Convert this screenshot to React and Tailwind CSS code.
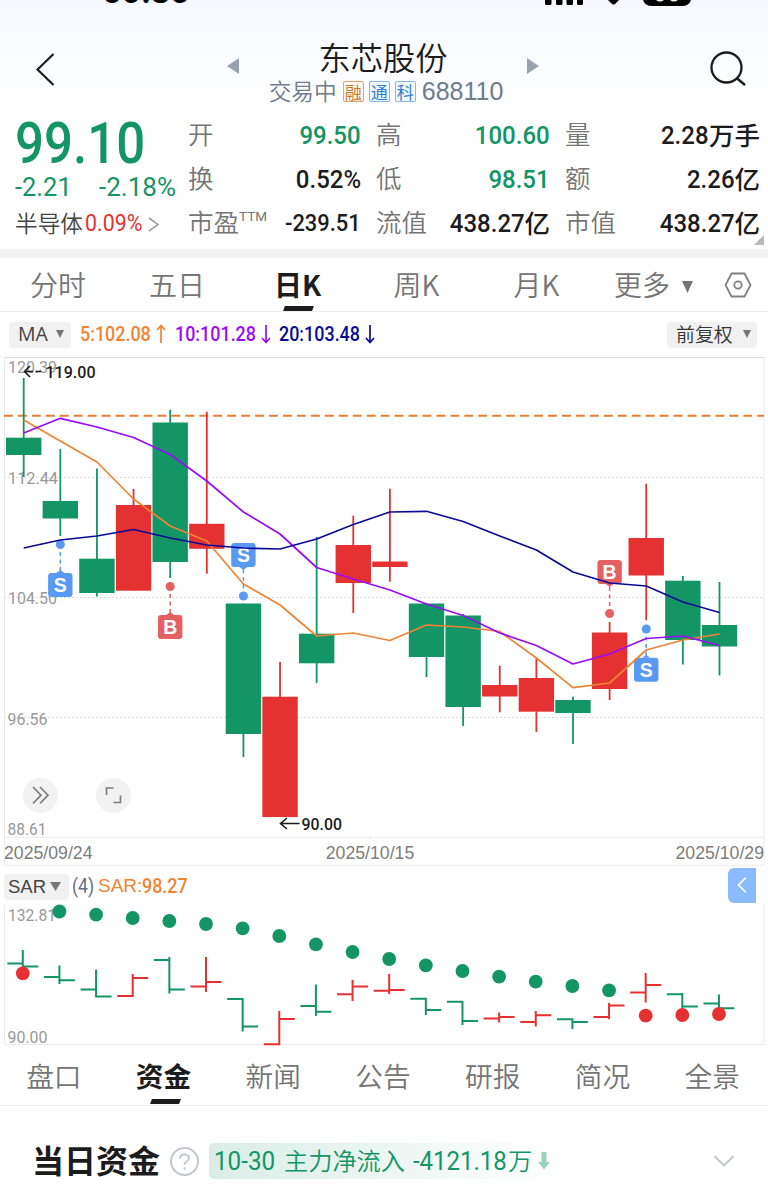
import React from 'react';
import clsx from 'clsx';

const GREEN = '#139565';
const RED = '#e63133';

// y values in chart coordinates, up = red, down = green
const candles = [
  { up: false, top: 437.7, bottom: 455, high: 378, low: 477 },
  { up: false, top: 501, bottom: 518.5, high: 449, low: 536 },
  { up: false, top: 558.7, bottom: 593, high: 468.5, low: 596.5 },
  { up: true, top: 505, bottom: 590.7, high: 489, low: 590.7 },
  { up: false, top: 422.5, bottom: 562, high: 409.7, low: 578 },
  { up: true, top: 523.8, bottom: 548.8, high: 411.7, low: 573.7 },
  { up: false, top: 603.5, bottom: 734, high: 603.5, low: 757 },
  { up: true, top: 696.7, bottom: 817, high: 662, low: 817 },
  { up: false, top: 633.7, bottom: 663.3, high: 537, low: 683 },
  { up: true, top: 545, bottom: 583, high: 515.7, low: 613 },
  { up: true, top: 561.5, bottom: 567, high: 488.7, low: 581.7 },
  { up: false, top: 603.5, bottom: 657, high: 603.5, low: 677 },
  { up: false, top: 615.5, bottom: 707, high: 614, low: 726 },
  { up: true, top: 685, bottom: 696.5, high: 665.7, low: 712.3 },
  { up: true, top: 678, bottom: 711.7, high: 658, low: 732 },
  { up: false, top: 700, bottom: 713, high: 696.7, low: 744 },
  { up: true, top: 632.5, bottom: 689, high: 622, low: 700 },
  { up: true, top: 538, bottom: 575.5, high: 483.7, low: 620.3 },
  { up: false, top: 580.7, bottom: 640, high: 576, low: 664.5 },
  { up: false, top: 625, bottom: 646.5, high: 582, low: 675.5 },
];

const ma5 = [420, 441, 462, 499, 526, 541, 584, 605, 636, 633, 640.5, 625, 627, 631.5, 658, 687.7, 683, 650, 640, 634];
const ma10 = [433, 418.3, 427, 437.5, 454.5, 481, 512, 534, 567.5, 579, 590, 604, 615.5, 633, 645.5, 664, 654, 638.5, 636, 645.5];
const ma20 = [548, 540, 536, 529.5, 538, 545, 548, 549, 539, 524.5, 512, 511.3, 521.5, 536, 550, 572, 583, 586, 602, 612.5];

const markers = [
  { i: 1, type: 'S', box: 573, dot: 544.5 },
  { i: 4, type: 'B', box: 615, dot: 586.5 },
  { i: 6, type: 'S', box: 543, dot: 596 },
  { i: 16, type: 'B', box: 560, dot: 613.5 },
  { i: 17, type: 'S', box: 657.7, dot: 629 },
];

// open, close, high, low
const sarBars = [
  [963.5, 966.5, 950, 970],
  [977, 980.3, 965.5, 984],
  [989.5, 996.5, 969.5, 997],
  [996, 978, 974, 996],
  [960, 989.5, 957, 993.5],
  [986.5, 982, 957, 992],
  [999, 1026.5, 999, 1031.5],
  [1044.3, 1019, 1011, 1044],
  [1006, 1011.7, 984.5, 1016],
  [994.3, 986.5, 980, 1001],
  [990.8, 990, 974, 994],
  [998.7, 1010, 998.7, 1015],
  [1001.7, 1021, 1001.7, 1025],
  [1018.5, 1017, 1012.5, 1022.5],
  [1022, 1015.3, 1011, 1026.5],
  [1019.3, 1022, 1019.3, 1029],
  [1017, 1005.5, 1003, 1019],
  [992.5, 985, 973, 1002.5],
  [994.3, 1006.5, 993, 1008],
  [1003.5, 1008.3, 994.5, 1013],
];

const sarDots = [973.3, 911.5, 914.7, 918, 921, 924, 928.3, 936, 944.3, 952, 959, 965.3, 971, 976.7, 981.7, 986, 990.3, 1015.7, 1015, 1014];
const sarRed = [0, 17, 18, 19];

const cx = (i) => 23.7 + i * 36.62;
const sx = (i) => 22.8 + i * 36.64;
const toPoints = (ys) => ys.map((y, i) => `${cx(i)},${y}`).join(' ');

// Narrow figures. The outer box holds the final width, the inner one is squeezed
const Num = ({ children, className, right, squeeze = 'scale-x-[.895]' }) => (
  <span className={clsx('flex shrink-0 whitespace-nowrap font-[Roboto]', right && 'justify-end', className)}>
    <span className={clsx('block', squeeze, right ? 'origin-right' : 'origin-left')}>{children}</span>
  </span>
);

const Triangle = ({ className }) => (
  <svg className={className} viewBox="0 0 10 10" preserveAspectRatio="none" fill="currentColor">
    <path d="M0 0H10L5 10Z" />
  </svg>
);

const StatusBar = () => (
  <div className="relative h-10 overflow-hidden">
    <span className="absolute left-[102px] -top-[27px] font-[Inter] text-[30px] leading-[38px] font-bold tracking-[-0.3px]">09:36</span>
    <svg className="absolute left-[544px] top-0" width="150" height="8" viewBox="0 0 150 8">
      <path d="M1 0h6.500v3.500q0 1.500-1.500 1.500H2.500q-1.500 0-1.500-1.500zM12 0h6.500v3.500q0 1.500-1.500 1.500h-3.500q-1.500 0-1.500-1.500zM22.500 0h6.500v3.500q0 1.500-1.500 1.500h-3.500q-1.500 0-1.500-1.500zM33 0h6v3.500q0 1.500-1.500 1.500h-3q-1.500 0-1.500-1.500z" />
      <path d="M64 0h11l-4 4q-1.500 1.200-3 0z" />
      <path d="M99 0h48q-2 6-9 6h-30q-7 0-9-6z" />
      <path d="M112 0q4 3 8 0zM126 0q4 3 8 0z" fill="#fff" />
    </svg>
  </div>
);

const Badge = ({ children, className }) => (
  <span className={clsx('flex h-[21px] w-[21px] items-center justify-center rounded-[2px] border text-[17px] leading-none', className)}>
    {children}
  </span>
);

const Header = () => (
  <div className="flex h-[70px] items-start justify-between pl-[36px] pr-[21px]">
    <svg className="mt-[13px]" width="20" height="34" viewBox="0 0 20 34" fill="none" stroke="#1b1b1b" strokeWidth="2.2">
      <path d="M17.500 1L1.500 16.500L17.500 32" />
    </svg>
    <div className="flex w-[320px] flex-col items-center">
      <div className="flex h-[37px] w-full items-center justify-between pl-[4px] pr-[4px]">
        <svg className="mt-[15px]" width="12" height="16" fill="#99a3af"><path d="M12 0V16L0 8Z" /></svg>
        <h1 className="-mt-[5px] text-[32.300px] leading-[32px] font-[350] text-[#1c1c1c]">东芯股份</h1>
        <svg className="mt-[15px]" width="12" height="16" fill="#99a3af"><path d="M0 0V16L12 8Z" /></svg>
      </div>
      <div className="flex h-7 items-center pl-[6px] text-[#6e7c8c]">
        <span className="mr-[6px] text-[22.700px] leading-7 font-[350]">交易中</span>
        <Badge className="mr-[5px] border-[#e0a46c] bg-[#fff8f0] text-[#c87a32]">融</Badge>
        <Badge className="mr-[5px] border-[#86b8ea] bg-[#f2f8ff] text-[#3080d0]">通</Badge>
        <Badge className="mr-[6px] border-[#86b8ea] bg-[#f2f8ff] text-[#3080d0]">科</Badge>
        <span className="font-['Liberation_Sans'] text-[25px] leading-7">688110</span>
      </div>
    </div>
    <svg className="mt-[11px]" width="37" height="36" viewBox="0 0 37 36" fill="none" stroke="#1b1b1b" strokeWidth="2.300">
      <circle cx="16.500" cy="16.500" r="15" />
      <path d="M26.500 27L35 34" />
    </svg>
  </div>
);

const Stat = ({ label, sup, value, unit, green, small }) => (
  <div className="flex h-11 items-center justify-between">
    <span className="flex pb-[3px] text-[25.500px] font-[350] text-[#757575]">
      {label}
      {sup && <sup className="top-0 mt-[8px] font-[Roboto] text-[13.500px] leading-none font-normal">{sup}</sup>}
    </span>
    <span
      className={clsx(
        'flex items-center font-medium',
        small ? 'text-[24.200px]' : 'text-[26.500px]',
        green ? 'text-[#139565]' : 'text-[#1c1c1c]'
      )}
    >
      <Num right className="w-[76px]" squeeze="scale-x-[.905]">{value}</Num>
      {unit && <span className="pb-[2px] text-[25.500px]">{unit}</span>}
    </span>
  </div>
);

const Quote = () => (
  <div className="flex h-[139px] pt-[3px]">
    <div className="w-[188px] pl-[15px]">
      <Num className="h-[52px] text-[57px] leading-[61px] font-medium text-[#139565]">99.10</Num>
      <div className="flex h-[44px] items-center text-[26px] font-[450] text-[#139565]">
        <Num className="w-[84px]" squeeze="scale-x-[.98]">-2.21</Num>
        <Num>
          <span className="block origin-left scale-x-[1.12]">-2.18%</span>
        </Num>
      </div>
      <div className="-mt-[4px] flex h-[38px] items-center">
        <span className="pb-[2px] text-[22.700px] font-[350] text-[#444]">半导体</span>
        <Num className="ml-[2px] w-[63px] text-[23.500px] font-[450] text-[#e63133]" squeeze="scale-x-[.91]">0.09%</Num>
        <svg width="11" height="15" fill="none" stroke="#9aa3ad" strokeWidth="1.600"><path d="M1 1L10 7.500L1 14" /></svg>
      </div>
    </div>
    <div className="w-[173px]">
      <Stat label="开" value="99.50" green />
      <Stat label="换" value="0.52%" />
      <Stat label="市盈" sup="TTM" value="-239.51" small />
    </div>
    <div className="ml-[15px] w-[174px]">
      <Stat label="高" value="100.60" green />
      <Stat label="低" value="98.51" green />
      <Stat label="流值" value="438.27" unit="亿" />
    </div>
    <div className="ml-[15px] w-[195px]">
      <Stat label="量" value="2.28" unit="万手" />
      <Stat label="额" value="2.26" unit="亿" />
      <Stat label="市值" value="438.27" unit="亿" />
    </div>
    <svg className="-ml-[6px] mt-[122px]" width="10" height="10" fill="#b9b9b9"><path d="M10 0V10H0Z" /></svg>
  </div>
);

const PeriodTabs = () => (
  <div className="flex h-[54px] items-center border-b border-[#ededed] pb-px text-[28px] font-[350] text-[#757575]">
    <span className="w-[119px] pl-[30px]">分时</span>
    <span className="w-[119px] pl-[30px]">五日</span>
    <span className="relative flex h-full w-[119px] items-center justify-center font-bold text-[#1c1c1c]">
      日K
      <i className="absolute -bottom-px left-[46px] h-[5px] w-[29px] -skew-x-[20deg] bg-[#1c1c1c]" />
    </span>
    <span className="w-[119px] text-center">周K</span>
    <span className="w-[121px] text-center">月K</span>
    <span className="pl-[17px]">更多</span>
    <Triangle className="ml-[12px] mt-[5px] h-[12px] w-[11px]" />
    <svg className="ml-[31px] mt-px" width="28" height="26" fill="none" stroke="#808080" strokeWidth="1.800">
      <path d="M7.500 1.500H20.500L26.500 13L20.500 24.500H7.500L1.500 13Z" />
      <circle cx="14" cy="13" r="3.700" />
    </svg>
  </div>
);

const MaArrow = ({ up }) => (
  <svg width="10" height="20" fill="none" stroke="currentColor" strokeWidth="1.700">
    <path d={up ? 'M5 19V1M1 6L5 1.500L9 6' : 'M5 1V19M1 14L5 18.500L9 14'} />
  </svg>
);

const MaBar = () => (
  <div className="flex h-[45px] items-center pl-[9px] pr-[11px]">
    <span className="flex h-[26px] w-[62px] items-center rounded-[4px] bg-[#f1f1f1] pb-px pl-[9px] text-[#444]">
      <span className="font-['Open_Sans'] text-[19.500px]">MA</span>
      <Triangle className="ml-[8px] h-[8px] w-[8px] text-[#777]" />
    </span>
    <div className="flex flex-1 items-center text-[19.700px] font-medium">
      <span className="flex w-[95px] items-center pl-[9px] text-[#f08433]">
        <Num className="w-[76px]" squeeze="scale-x-[.91]">5:102.08</Num>
        <MaArrow up />
      </span>
      <span className="flex w-[104px] items-center pl-[9px] text-[#9a0cf5]">
        <Num className="w-[86px]" squeeze="scale-x-[.91]">10:101.28</Num>
        <MaArrow />
      </span>
      <span className="flex items-center pl-[9px] text-[#0a0a96]">
        <Num className="w-[86px]" squeeze="scale-x-[.91]">20:103.48</Num>
        <MaArrow />
      </span>
    </div>
    <span className="flex h-[26px] w-[90px] items-center rounded-[4px] bg-[#f1f1f1] pb-px pl-[9px] text-[18.900px] font-[350] text-[#333]">
      前复权
      <Triangle className="ml-[10px] h-[8px] w-[8px] text-[#777]" />
    </span>
  </div>
);

const Marker = ({ i, type, box, dot }) => {
  const x = cx(i);
  const color = type === 'S' ? '#5899f4' : '#e56062';
  const below = box > dot;
  const edge = below ? box : box + 24;
  const tip = below ? edge - 3 : edge + 3;
  return (
    <g fill={color}>
      <path d={`M${x} ${dot}V${edge}`} stroke={color} strokeWidth="1.500" strokeDasharray="4 3.500" />
      <circle cx={x} cy={dot} r="4.500" />
      <path d={`M${x - 4} ${edge}H${x + 4}L${x} ${tip}Z`} />
      <rect x={x - 12.200} y={box} width="24.400" height="24" rx="3" />
      <text x={x} y={box + 19} textAnchor="middle" fill="#fff" className="font-['Liberation_Sans'] text-[19.500px] font-bold">{type}</text>
    </g>
  );
};

const KLineChart = () => (
  <svg className="block" width="768" height="509" viewBox="0 357 768 509">
    <g fill="none" stroke="#ebebeb">
      <path d="M4 357.500H764.500" stroke="#dedede" />
      <path d="M4.500 357V865M764 357V865M4 837.300H764M4 865.300H764M370 835V841" />
      <path d="M4 477.500H764M4 597.500H764M4 717.500H764" stroke="#dcdcdc" strokeDasharray="2 2" />
    </g>
    <g fill="#999" className="font-[Roboto] text-[17.200px]">
      <text x="8" y="373" textLength="49" lengthAdjust="spacingAndGlyphs">120.39</text>
      <text x="8" y="484" textLength="50" lengthAdjust="spacingAndGlyphs">112.44</text>
      <text x="8" y="604" textLength="49" lengthAdjust="spacingAndGlyphs">104.50</text>
      <text x="7.500" y="724.500" textLength="40" lengthAdjust="spacingAndGlyphs">96.56</text>
      <text x="7.500" y="835" textLength="39" lengthAdjust="spacingAndGlyphs">88.61</text>
    </g>
    <path d="M4 415.700H764" stroke="#e87d33" strokeWidth="2" strokeDasharray="8.900 5.050" />
    {candles.map((c, i) => (
      <g key={i} fill={c.up ? RED : GREEN}>
        <rect x={cx(i) - 0.900} y={c.high} width="1.800" height={c.low - c.high} />
        <rect x={cx(i) - 17.700} y={c.top} width="35.400" height={c.bottom - c.top} />
      </g>
    ))}
    {markers.map((m) => <Marker key={m.i} {...m} />)}
    <g fill="none" strokeWidth="1.700" strokeLinejoin="round">
      <polyline points={toPoints(ma5)} stroke="#f08433" />
      <polyline points={toPoints(ma10)} stroke="#9a0cf5" />
      <polyline points={toPoints(ma20)} stroke="#0a0a96" />
    </g>
    <g fill="none" stroke="#1c1c1c" strokeWidth="1.600">
      <path d="M30 366L24.500 371.500L30 377M25 371.500H33M35.500 371.500H41" />
      <path d="M287 818L280.500 823.500L287 829M281 823.500H299.500" />
    </g>
    <g fill="#1c1c1c" className="font-[Roboto] text-[17.200px] font-medium">
      <text x="45.500" y="378" textLength="50" lengthAdjust="spacingAndGlyphs">119.00</text>
      <text x="301.500" y="830" textLength="40.500" lengthAdjust="spacingAndGlyphs">90.00</text>
    </g>
    <g fill="#f2f2f2">
      <circle cx="40.300" cy="795.500" r="17.500" />
      <circle cx="113.500" cy="795.500" r="17.500" />
    </g>
    <g fill="none" stroke="#7d7d7d" strokeWidth="1.700">
      <path d="M33 787L41 795.200L33 803.500M40 787L48 795.200L40 803.500" />
      <path d="M106.500 795V788H113.500M120.500 795.500V802.500H113.500" />
    </g>
    <g fill="#7d7d7d" className="font-['Liberation_Sans'] text-[17.700px]">
      <text x="4" y="858.500">2025/09/24</text>
      <text x="370" y="858.500" textAnchor="middle">2025/10/15</text>
      <text x="764" y="858.500" textAnchor="end">2025/10/29</text>
    </g>
  </svg>
);

const SarBar = () => (
  <div className="flex h-[39px] items-center pl-[4px] pr-[12px] pt-[2px]">
    <span className="flex h-[26px] w-[65px] items-center rounded-[4px] bg-[#f1f1f1] pl-[4px] text-[#444]">
      <span className="font-['Liberation_Sans'] text-[18.500px]">SAR</span>
      <Triangle className="ml-[4px] h-[9px] w-[11px] text-[#777]" />
    </span>
    <Num className="ml-[3px] w-[26px] text-[19.700px] text-[#667085]">(4)</Num>
    <span className="font-['Liberation_Sans'] text-[19px] text-[#f08433]">SAR:</span>
    <Num className="flex-1 text-[19.700px] font-medium text-[#f08433]" squeeze="scale-x-[.91]">98.27</Num>
    <button className="-mt-[3px] flex h-[35px] w-[28px] items-center justify-center rounded-l-[6px] bg-[#8abaff]">
      <svg width="10" height="18" fill="none" stroke="#fff" strokeWidth="1.700"><path d="M9 1.500L1.500 9L9 16.500" /></svg>
    </button>
  </div>
);

const SarChart = () => (
  <svg className="block overflow-visible" width="768" height="140" viewBox="0 905 768 140">
    <path d="M4.500 905V1044.500H764V905" fill="none" stroke="#ececec" />
    <g fill="#999" className="font-[Roboto] text-[17.200px]">
      <text x="8" y="920.500" textLength="48" lengthAdjust="spacingAndGlyphs">132.81</text>
      <text x="7.500" y="1042.500" textLength="40" lengthAdjust="spacingAndGlyphs">90.00</text>
    </g>
    {sarBars.map(([open, close, high, low], i) => (
      <path
        key={i}
        d={`M${sx(i)} ${high}V${low}M${sx(i) - 15.500} ${open}H${sx(i) + 1}M${sx(i) - 1} ${close}H${sx(i) + 15.500}`}
        stroke={close < open ? RED : GREEN}
        strokeWidth="2"
      />
    ))}
    {sarDots.map((y, i) => (
      <circle key={i} cx={sx(i)} cy={y} r="6.900" fill={sarRed.includes(i) ? RED : GREEN} />
    ))}
  </svg>
);

const sections = ['盘口', '资金', '新闻', '公告', '研报', '简况', '全景'];

const SectionTabs = () => (
  <div className="grid h-[61px] grid-cols-7 border-b border-[#efefef] text-[27.700px]">
    {sections.map((name) => (
      <span
        key={name}
        className={clsx(
          'relative flex items-center justify-center pr-[2px] pt-px',
          name === '资金' ? 'font-bold text-[#1c1c1c]' : 'font-[350] text-[#757575]'
        )}
      >
        {name}
        {name === '资金' && <i className="absolute bottom-px left-[41px] h-[5px] w-[29px] -skew-x-[20deg] bg-[#1c1c1c]" />}
      </span>
    ))}
  </div>
);

const FundSummary = () => (
  <div className="flex h-[82px] items-center pl-[32px] pr-[33px] pt-[28px]">
    <h2 className="-mt-[4px] text-[32px] leading-[40px] font-bold text-[#1c1c1c]">当日资金</h2>
    <svg className="ml-[10px]" width="29" height="29" fill="none" stroke="#c3c7cf" strokeWidth="2">
      <circle cx="14.500" cy="14.500" r="13.500" />
      <path d="M10 11.500Q10 7.500 14.500 7.500Q19 7.500 19 11Q19 13 16.500 14.500Q14.500 15.700 14.500 18M14.500 20.300V22.800" />
    </svg>
    <div className="ml-[10px] flex h-[36px] w-[350px] items-center rounded-[5px] bg-linear-to-r from-[#d9ede6] to-white pl-[5px] text-[24.200px] font-[350] text-[#139565]">
      <Num className="w-[70px] text-[25.500px] font-normal" squeeze="scale-x-[.95]">10-30</Num>
      <span className="pb-[2px]">主力净流入</span>
      <Num className="ml-[8px] w-[95px] text-[25.500px] font-normal" squeeze="scale-x-[.94]">-4121.18</Num>
      <span className="pb-[2px]">万</span>
      <svg className="ml-[6px]" width="12" height="18"><path d="M3.500 0H8.500V10H12L6 17.500L0 10H3.500Z" fill="#9ad3bb" /></svg>
    </div>
    <svg className="ml-auto" width="22" height="12" fill="none" stroke="#c3c7cf" strokeWidth="2"><path d="M1.500 1L11 10.500L20.500 1" /></svg>
  </div>
);

const App = () => (
  <div className="h-[1188px] w-[768px] overflow-hidden bg-white font-['Noto_Sans_CJK_SC',sans-serif]">
    <div className="h-[249px] bg-linear-to-b from-[#f6f8ff] to-white to-[110px]">
      <StatusBar />
      <Header />
      <Quote />
    </div>
    <div className="h-[9px] bg-[#f2f2f2]" />
    <PeriodTabs />
    <MaBar />
    <KLineChart />
    <SarBar />
    <SarChart />
    <SectionTabs />
    <FundSummary />
  </div>
);

export default App;
